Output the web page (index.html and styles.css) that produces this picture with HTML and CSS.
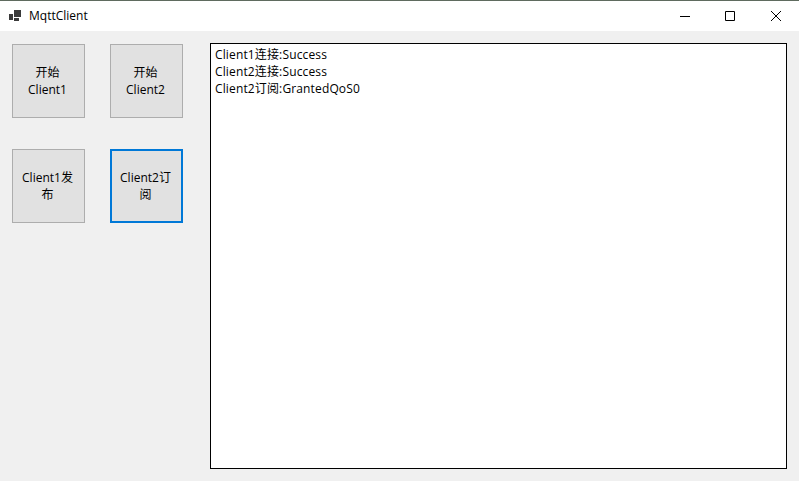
FILE: index.html
```html
<!DOCTYPE html>
<html lang="zh-CN">
<head>
<meta charset="utf-8">
<title>MqttClient</title>
<link rel="stylesheet" href="styles.css">
</head>
<body>
<div class="window">
  <header class="titlebar">
    <div class="title-left">
      <svg class="app-icon" width="12" height="11" viewBox="0 0 12 11"><path class="glyph" d="M0 4h4v6H0zM5 0h7v7H5zM5 8h5v3H5z"/></svg>
      <span class="title">MqttClient</span>
    </div>
    <div class="controls">
      <svg width="10" height="10" viewBox="0 0 10 10"><path class="stroke" d="M0 5.500h10"/></svg>
      <svg width="10" height="10" viewBox="0 0 10 10"><path class="stroke" d="M.5.500h9v9h-9z"/></svg>
      <svg class="close" width="10" height="10" viewBox="0 0 10 10"><path class="stroke" d="M0 0l10 10M10 0L0 10"/></svg>
    </div>
  </header>
  <main class="content">
    <section class="buttons">
      <button class="btn">开始<br>Client1</button>
      <button class="btn">开始<br>Client2</button>
      <button class="btn">Client1发<br>布</button>
      <button class="btn focused">Client2订<br>阅</button>
    </section>
    <section class="log">
      <div>Client1连接:Success</div>
      <div>Client2连接:Success</div>
      <div>Client2订阅:GrantedQoS0</div>
    </section>
  </main>
</div>
</body>
</html>
```
FILE: styles.css
```css
* { box-sizing: border-box; }
html, body { margin: 0; padding: 0; }
body {
  width: 799px;
  height: 481px;
  overflow: hidden;
  font-family: "Open Sans", "Noto Sans CJK SC", sans-serif;
  font-size: 12px;
  color: #000;
  background: #f0f0f0;
}
.window { display: flex; flex-direction: column; height: 481px; }
.titlebar {
  height: 31px;
  flex: none;
  background: #fff;
  border-top: 1px solid #5f6b5f;
  display: flex;
  justify-content: space-between;
  align-items: center;
}
.title-left { display: flex; align-items: center; padding-left: 9px; gap: 8px; }
.app-icon { display: block; margin-top: -1px; }
.glyph { fill: #3a3a3a; }
.title { color: #000; line-height: 16px; margin-top: -1px; }
.controls { display: flex; align-items: center; gap: 35px; padding-right: 18px; }
.close { margin-left: 1px; }
.stroke { fill: none; stroke: #000; stroke-width: 1; }
.content {
  flex: 1;
  display: flex;
  background: #f0f0f0;
  padding: 12px;
  align-items: flex-start;
}
.buttons {
  display: grid;
  grid-template-columns: 73px 73px;
  grid-template-rows: 74px 74px;
  column-gap: 25px;
  row-gap: 31px;
  margin-top: 1px;
  width: 198px;
}
.btn {
  font: inherit;
  line-height: 17px;
  color: #000;
  background: #e1e1e1;
  border: 1px solid #adadad;
  padding: 0 2px 0 0;
  text-align: center;
}
.focused { border: 2px solid #0078d7; }
.log {
  width: 577px;
  height: 426px;
  background: #fff;
  border: 1px solid #000;
  padding: 2px 4px;
  line-height: 17px;
  letter-spacing: .14px;
}
```
